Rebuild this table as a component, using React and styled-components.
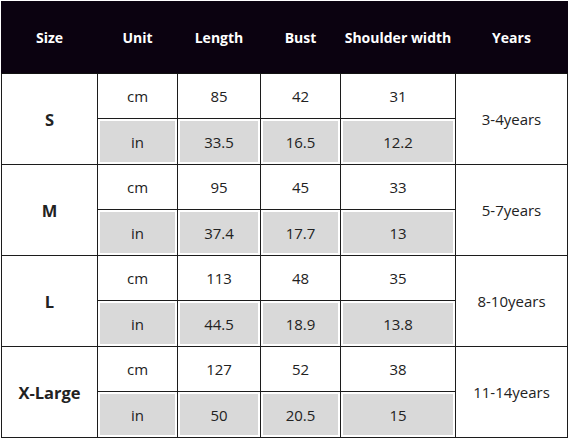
import React from 'react';
import styled, { createGlobalStyle } from 'styled-components';

const GlobalStyle = createGlobalStyle`
  html, body {
    margin: 0;
    padding: 0;
    background: #ffffff;
  }
  body {
    font-family: "Open Sans", "Noto Sans", sans-serif;
  }
`;

const columns = [
  { title: 'Size', width: 96 },
  { title: 'Unit', width: 80 },
  { title: 'Length', width: 83 },
  { title: 'Bust', width: 80 },
  { title: 'Shoulder width', width: 115 },
  { title: 'Years', width: 112 },
];

const sizes = [
  { name: 'S', years: '3-4years', cm: ['85', '42', '31'], inch: ['33.5', '16.5', '12.2'] },
  { name: 'M', years: '5-7years', cm: ['95', '45', '33'], inch: ['37.4', '17.7', '13'] },
  { name: 'L', years: '8-10years', cm: ['113', '48', '35'], inch: ['44.5', '18.9', '13.8'] },
  { name: 'X-Large', years: '11-14years', cm: ['127', '52', '38'], inch: ['50', '20.5', '15'] },
];

const App = () => {
  return (
    <>
      <GlobalStyle />
      <Page>
        <Table>
          <colgroup>
            {columns.map((c) => (
              <col key={c.title} style={{ width: c.width }} />
            ))}
          </colgroup>
          <thead>
            <tr>
              {columns.map((c) => (
                <HeadCell key={c.title}>{c.title}</HeadCell>
              ))}
            </tr>
          </thead>
          <tbody>
            {sizes.map((s) => (
              <React.Fragment key={s.name}>
                <Row>
                  <SizeCell rowSpan={2}>{s.name}</SizeCell>
                  <Cell>cm</Cell>
                  {s.cm.map((v, i) => (
                    <Cell key={i}>{v}</Cell>
                  ))}
                  <Cell rowSpan={2}>{s.years}</Cell>
                </Row>
                <Row $tall>
                  <Cell $shaded>in</Cell>
                  {s.inch.map((v, i) => (
                    <Cell key={i} $shaded>{v}</Cell>
                  ))}
                </Row>
              </React.Fragment>
            ))}
          </tbody>
        </Table>
      </Page>
    </>
  );
};

const Page = styled.div`
  padding: 1px 0 0 1px;
  width: 569px;
  height: 440px;
  box-sizing: border-box;
`;

const Table = styled.table`
  border-collapse: collapse;
  table-layout: fixed;
  width: 566px;
  color: #222;
  font-size: 15px;
`;

const HeadCell = styled.th`
  height: 71px;
  padding: 0;
  background: #0b0210;
  color: #fff;
  font-weight: 700;
  font-size: 14px;
  text-align: center;
  border: 1px solid #0b0210;
  border-bottom-color: #111;
`;

const Row = styled.tr`
  height: ${(p) => (p.$tall ? 46 : 45)}px;
`;

const Cell = styled.td`
  padding: 0;
  text-align: center;
  vertical-align: middle;
  border: 1px solid #1c1c1c;
  background: ${(p) => (p.$shaded ? '#d9d9d9' : '#fff')};
  box-shadow: ${(p) => (p.$shaded ? 'inset 0 0 0 2px #fff' : 'none')};
`;

const SizeCell = styled(Cell)`
  font-weight: 700;
  font-size: 16.5px;
`;

export default App;
